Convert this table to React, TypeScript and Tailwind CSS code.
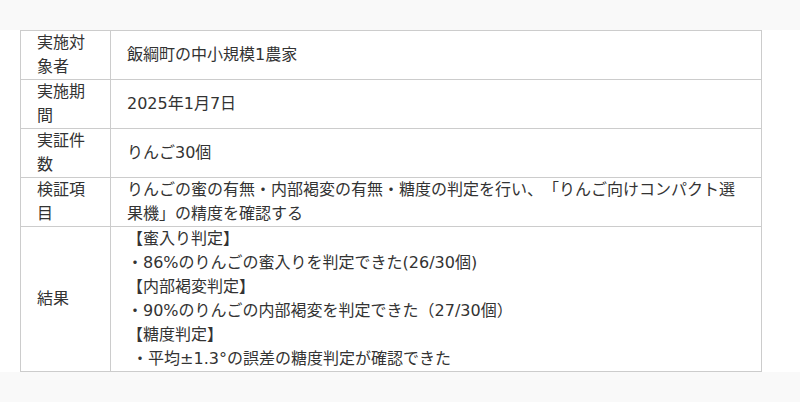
const ROWS: { label: string; lines: string[] }[] = [
  { label: '実施対象者', lines: ['飯綱町の中小規模1農家'] },
  { label: '実施期間', lines: ['2025年1月7日'] },
  { label: '実証件数', lines: ['りんご30個'] },
  {
    label: '検証項目',
    lines: ['りんごの蜜の有無・内部褐変の有無・糖度の判定を行い、「りんご向けコンパクト選果機」の精度を確認する'],
  },
  {
    label: '結果',
    lines: [
      '【蜜入り判定】',
      '・86%のりんごの蜜入りを判定できた(26/30個)',
      '【内部褐変判定】',
      '・90%のりんごの内部褐変を判定できた（27/30個）',
      '【糖度判定】',
      ' ・平均±1.3°の誤差の糖度判定が確認できた',
    ],
  },
]

export default function App() {
  return (
    <div
      className="flex h-[402px] flex-col bg-[#f9f9f9] text-[16px] leading-[24px] text-[#333] [text-spacing-trim:space-all]"
      style={{ fontFamily: '"DejaVu Sans", "Noto Sans CJK JP", sans-serif' }}
    >
      <div className="h-[30px] shrink-0" />
      <div className="bg-white pl-[20px] pr-[38px]">
        <table className="w-full table-fixed border-collapse">
          <colgroup>
            <col className="w-[90px]" />
            <col />
          </colgroup>
          <tbody>
            {ROWS.map((r) => (
              <tr key={r.label}>
                <td className="border border-[#ccc] px-4 py-0 align-middle">{r.label}</td>
                <td className="border border-[#ccc] px-4 py-0 align-middle">
                  {r.lines.map((l, i) => (
                    <div key={i} className="whitespace-pre-wrap">
                      {l}
                    </div>
                  ))}
                </td>
              </tr>
            ))}
          </tbody>
        </table>
      </div>
    </div>
  )
}
